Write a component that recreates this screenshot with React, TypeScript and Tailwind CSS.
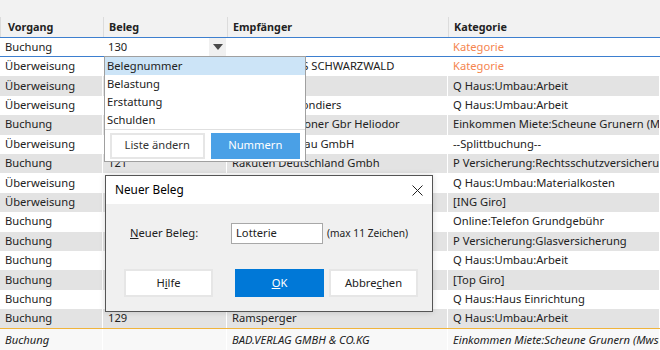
import React from 'react'

type Row = { v: string; b?: string; e?: string; k: string; kOrange?: boolean }

const rows: Row[] = [
  { v: 'Überweisung', e: 'HOLZBAU HAS SCHWARZWALD', k: 'Kategorie', kOrange: true },
  { v: 'Überweisung', e: 'Stadtwerke', k: 'Q Haus:Umbau:Arbeit' },
  { v: 'Überweisung', e: 'Elektrobau Blondiers', k: 'Q Haus:Umbau:Arbeit' },
  { v: 'Buchung', e: 'Wohnbau Schoner Gbr Heliodor', k: 'Einkommen Miete:Scheune Grunern (Mwst)' },
  { v: 'Überweisung', e: 'Fenster Holzbau GmbH', k: '--Splittbuchung--' },
  { v: 'Buchung', b: '121', e: 'Rakuten Deutschland Gmbh', k: 'P Versicherung:Rechtsschutzversicherung' },
  { v: 'Überweisung', k: 'Q Haus:Umbau:Materialkosten' },
  { v: 'Überweisung', k: '[ING Giro]' },
  { v: 'Buchung', k: 'Online:Telefon Grundgebühr' },
  { v: 'Buchung', k: 'P Versicherung:Glasversicherung' },
  { v: 'Buchung', k: 'Q Haus:Umbau:Arbeit' },
  { v: 'Buchung', k: '[Top Giro]' },
  { v: 'Buchung', k: 'Q Haus:Haus Einrichtung' },
  { v: 'Buchung', b: '129', e: 'Ramsperger', k: 'Q Haus:Umbau:Arbeit' },
]

const cols = 'grid grid-cols-[103px_124px_221px_212px]'
const cell = 'px-[5px] whitespace-nowrap overflow-hidden border-r border-white flex items-center'

const Btn = ({ children, primary, className = '' }: { children: React.ReactNode; primary?: boolean; className?: string }) => (
  <div
    className={
      'flex items-center justify-center ' +
      (primary ? 'bg-[#0078d7] text-white border border-[#0078d7] ' : 'bg-white text-[#222] border-2 border-[#e6e6e6] ') +
      className
    }
  >
    {children}
  </div>
)

export default function App() {
  return (
    <div className="relative w-[660px] h-[350px] overflow-hidden bg-white text-[11.2px] text-[#222]" style={{ fontFamily: '"Noto Sans", "Open Sans", sans-serif' }}>
      {/* header */}
      <div className="bg-[#f2f2f2] h-[38px] pt-[17px] border-b border-[#3d7fcf]">
        <div className={cols + ' h-[20px] font-bold text-[10.8px]'}>
          <div className="px-[7px] border-l border-[#dcdcdc] flex items-center">Vorgang</div>
          <div className="px-[5px] border-l border-[#dcdcdc] flex items-center">Beleg</div>
          <div className="px-[5px] border-l border-[#dcdcdc] flex items-center">Empfänger</div>
          <div className="px-[5px] border-l border-[#dcdcdc] flex items-center">Kategorie</div>
        </div>
      </div>

      {/* edit row */}
      <div className={cols + ' h-[19px] border-b border-[#3d7fcf]'}>
        <div className={cell}>Buchung</div>
        <div className="flex items-center pl-[5px] border-r border-white">
          <span className="flex-1">130</span>
          <span className="w-[17px] h-full bg-[#f0f0f0] flex items-center justify-center">
            <svg width="10" height="6" viewBox="0 0 10 6">
              <path d="M0 0h10L5 6z" fill="#4a4a4a" />
            </svg>
          </span>
        </div>
        <div className={cell}></div>
        <div className={cell + ' text-[#f5854f]'}>Kategorie</div>
      </div>

      {rows.map((r, i) => (
        <div key={i} className={cols + ' h-[19.4px] ' + (i % 2 === 1 ? 'bg-[#e3e3e3]' : 'bg-white')}>
          <div className={cell}>{r.v}</div>
          <div className={cell}>{r.b}</div>
          <div className={cell}>{r.e}</div>
          <div className={cell + (r.kOrange ? ' text-[#f5854f]' : '')}>{r.k}</div>
        </div>
      ))}

      <div className={cols + ' h-[22px] bg-[#f8f8f8] border-t border-[#f0b43c] italic'}>
        <div className={cell}>Buchung</div>
        <div className={cell}></div>
        <div className={cell}>BAD.VERLAG GMBH &amp; CO.KG</div>
        <div className={cell}>Einkommen Miete:Scheune Grunern (Mwst)</div>
      </div>

      {/* dropdown popup */}
      <div className="absolute left-[104px] top-[56px] w-[202px] h-[106px] bg-white border border-[#a0a0a0] flex flex-col">
        <div className="h-[18px] bg-[#cce4f7] px-[2px] flex items-center">Belegnummer</div>
        <div className="h-[18px] px-[2px] flex items-center">Belastung</div>
        <div className="h-[18px] px-[2px] flex items-center">Erstattung</div>
        <div className="h-[18px] px-[2px] flex items-center">Schulden</div>
        <div className="flex-1 border-t border-[#e0e0e0] flex items-center gap-[6px] px-[5px]">
          <Btn className="w-[95px] h-[26px] text-[#333]">Liste ändern</Btn>
          <div className="w-[90px] h-[26px] bg-[#4aa0e6] text-white flex items-center justify-center">Nummern</div>
        </div>
      </div>

      {/* dialog */}
      <div className="absolute left-[105px] top-[175px] w-[328px] h-[137px] border border-[#555] bg-[#f0f0f0] flex flex-col shadow-[0_0_6px_rgba(0,0,0,0.15)]">
        <div className="h-[28px] bg-white flex items-center justify-between pl-[9px] pr-[9px] text-[11.8px] text-black">
          <span>Neuer Beleg</span>
          <svg width="11" height="11" viewBox="0 0 11 11">
            <path d="M0.5 0.5l10 10M10.5 0.5l-10 10" stroke="#222" strokeWidth="1" />
          </svg>
        </div>
        <div className="flex items-center mt-[19px] pl-[24px]">
          <span className="w-[101px]">
            <span className="underline">N</span>euer Beleg:
          </span>
          <div className="w-[92px] h-[21px] bg-white border border-[#a8a8a8] flex items-center px-[4px]">Lotterie</div>
          <span className="ml-[4px] text-[10.2px]">(max 11 Zeichen)</span>
        </div>
        <div className="flex items-center mt-[25px] pl-[18px]">
          <Btn className="w-[89px] h-[28px]">
            H<span className="underline">i</span>lfe
          </Btn>
          <Btn primary className="w-[89px] h-[28px] ml-[22px]">
            <span className="underline">O</span>K
          </Btn>
          <Btn className="w-[89px] h-[28px] ml-[5px]">
            Abbre<span className="underline">c</span>hen
          </Btn>
        </div>
      </div>
    </div>
  )
}
